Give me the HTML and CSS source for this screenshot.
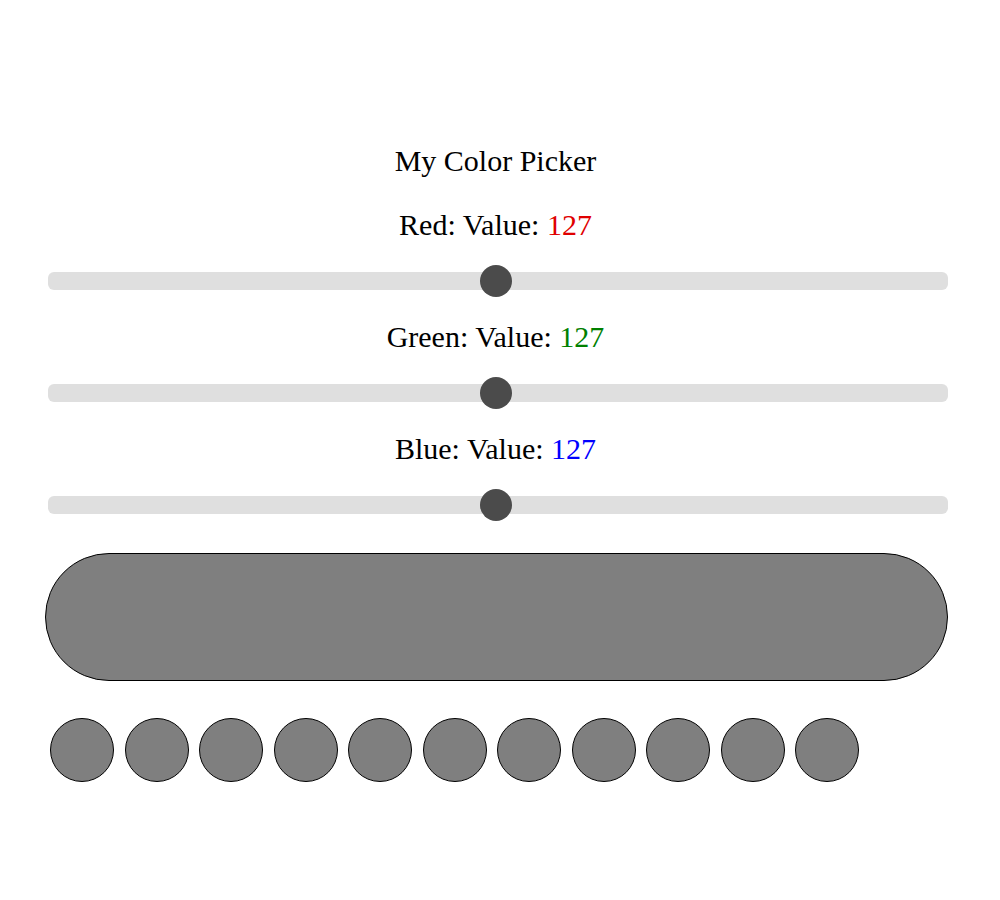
FILE: index.html
```html
<!DOCTYPE html>
<html>
<head>
<meta charset="utf-8">
<title>My Color Picker</title>
<link rel="stylesheet" href="styles.css">
</head>
<body>
<main class="app">
  <h1 class="title">My Color Picker</h1>
  <div class="channel">
    <label class="label">Red: Value: <span class="val red">127</span></label>
    <input class="slider" type="range" min="0" max="255" value="127">
  </div>
  <div class="channel">
    <label class="label">Green: Value: <span class="val green">127</span></label>
    <input class="slider" type="range" min="0" max="255" value="127">
  </div>
  <div class="channel">
    <label class="label">Blue: Value: <span class="val blue">127</span></label>
    <input class="slider" type="range" min="0" max="255" value="127">
  </div>
  <div class="preview"></div>
  <div class="swatches">
    <div class="swatch"></div>
    <div class="swatch"></div>
    <div class="swatch"></div>
    <div class="swatch"></div>
    <div class="swatch"></div>
    <div class="swatch"></div>
    <div class="swatch"></div>
    <div class="swatch"></div>
    <div class="swatch"></div>
    <div class="swatch"></div>
    <div class="swatch"></div>
  </div>
</main>
</body>
</html>
```
FILE: styles.css
```css
html, body {
  margin: 0;
  padding: 0;
  background: #fff;
}
body {
  font-family: "Liberation Serif", "Times New Roman", serif;
  color: #000;
}
.app {
  width: 900px;
  margin: 0 0 0 48px;
  padding-top: 141px;
  display: flex;
  flex-direction: column;
  align-items: stretch;
}
.title {
  margin: 0;
  padding-right: 5px;
  font-size: 30px;
  font-weight: normal;
  line-height: 40px;
  height: 40px;
  text-align: center;
}
.channel {
  display: flex;
  flex-direction: column;
  align-items: stretch;
  margin-top: 24px;
  gap: 20px;
}
.channel + .channel {
  margin-top: 20px;
}
.label {
  display: block;
  padding-right: 5px;
  font-size: 30px;
  line-height: 40px;
  height: 40px;
  text-align: center;
}
.red { color: #e00000; }
.green { color: #008000; }
.blue { color: #0000ff; }
.slider {
  -webkit-appearance: none;
  appearance: none;
  margin: 0;
  width: 100%;
  height: 32px;
  background: transparent;
}
.slider::-webkit-slider-runnable-track {
  height: 18px;
  background: #dfdfdf;
  border-radius: 6px;
}
.slider::-webkit-slider-thumb {
  -webkit-appearance: none;
  appearance: none;
  width: 32px;
  height: 32px;
  border-radius: 50%;
  background: #4b4b4b;
  margin-top: -7px;
  border: none;
}
.preview {
  margin-top: 32px;
  margin-left: -3px;
  height: 128px;
  border: 1px solid #000;
  border-radius: 64px;
  background: #7f7f7f;
  box-sizing: border-box;
}
.swatches {
  margin-top: 37px;
  padding-left: 2px;
  display: flex;
  gap: 10.5px;
}
.swatch {
  width: 64px;
  height: 64px;
  box-sizing: border-box;
  border: 1px solid #000;
  border-radius: 50%;
  background: #7f7f7f;
  flex: none;
}
```
